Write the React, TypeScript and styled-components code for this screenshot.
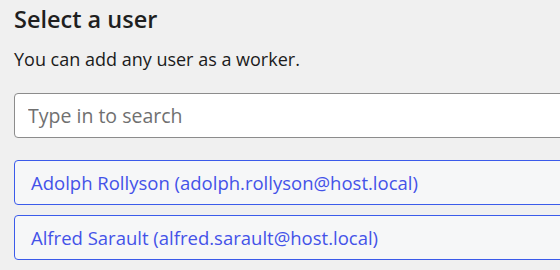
import React from 'react';
import styled, { createGlobalStyle } from 'styled-components';

const GlobalStyle = createGlobalStyle`
  html, body {
    margin: 0;
    padding: 0;
    background: #f0f0f0;
    overflow: hidden;
  }
  body {
    font-family: 'Open Sans', 'Noto Sans', sans-serif;
    color: #1b1b1b;
  }
`;

const users = [
  { name: 'Adolph Rollyson', email: 'adolph.rollyson@host.local' },
  { name: 'Alfred Sarault', email: 'alfred.sarault@host.local' },
];

const App: React.FC = () => {
  return (
    <>
      <GlobalStyle />
      <Page>
        <Title>Select a user</Title>
        <Description>You can add any user as a worker.</Description>
        <SearchInput placeholder="Type in to search" />
        <UserList>
          {users.map(u => (
            <UserItem key={u.email}>
              {u.name} ({u.email})
            </UserItem>
          ))}
        </UserList>
      </Page>
    </>
  );
};

const Page = styled.div`
  padding: 3px 0 0 14px;
  width: 620px;
  display: flex;
  flex-direction: column;
`;

const Title = styled.h1`
  font-size: 23.5px;
  font-weight: 600;
  line-height: 32px;
  margin: 0;
  color: #1f1f1f;
`;

const Description = styled.p`
  font-size: 18px;
  line-height: 24px;
  margin: 12px 0 0;
  color: #1b1b1b;
`;

const SearchInput = styled.input`
  box-sizing: border-box;
  margin-top: 22px;
  height: 45px;
  width: 100%;
  padding: 0 13px;
  border: 1px solid #8c8c8c;
  border-radius: 4px;
  background: #ffffff;
  font-family: inherit;
  font-size: 19.5px;
  color: #1b1b1b;
  outline: none;

  &::placeholder {
    color: #707070;
  }
`;

const UserList = styled.div`
  margin-top: 22px;
  display: flex;
  flex-direction: column;
  gap: 10px;
`;

const UserItem = styled.div`
  box-sizing: border-box;
  height: 45px;
  display: flex;
  align-items: center;
  padding: 0 16px;
  border: 1px solid #3b5bea;
  border-radius: 4px;
  background: #f6f7f8;
  color: #4452e8;
  font-size: 18.5px;
`;

export default App;
